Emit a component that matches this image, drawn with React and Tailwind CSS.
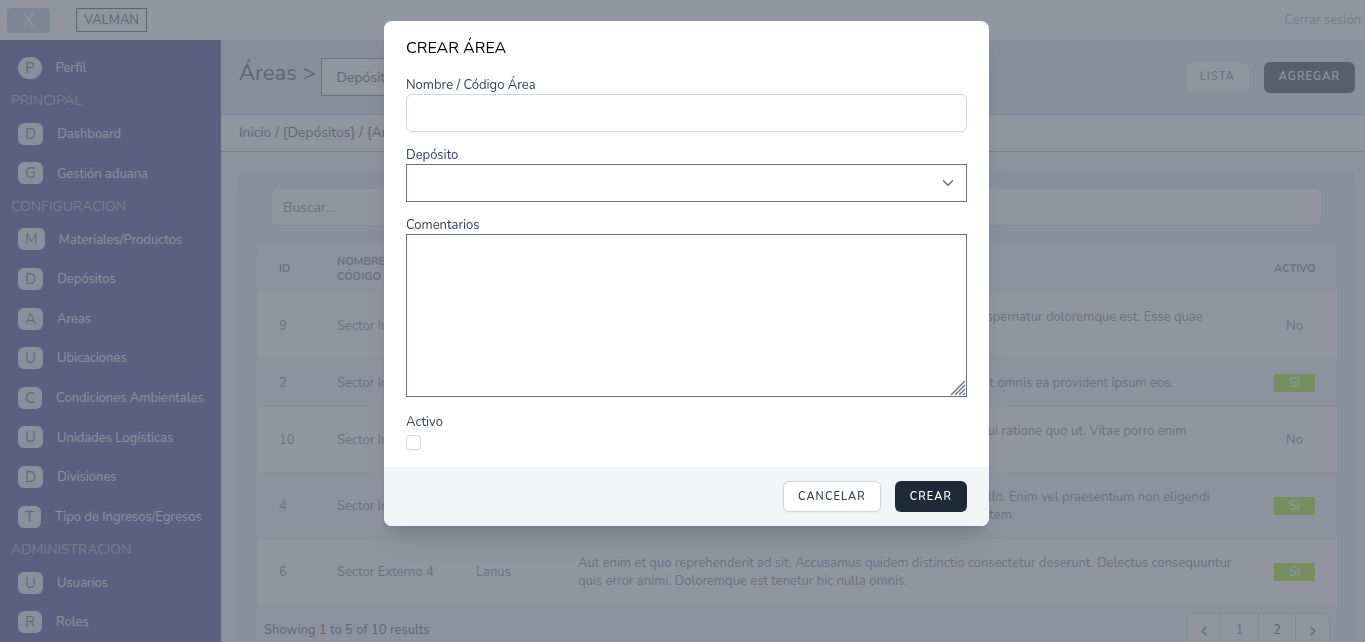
import { ChevronDown } from "lucide-react";

const profile = [{ label: "Perfil", round: true }];
const sections = [
  { title: "PRINCIPAL", items: ["Dashboard", "Gestión aduana"] },
  {
    title: "CONFIGURACION",
    items: [
      "Materiales/Productos",
      "Depósitos",
      "Areas",
      "Ubicaciones",
      "Condiciones Ambientales",
      "Unidades Logísticas",
      "Divisiones",
      "Tipo de Ingresos/Egresos",
    ],
  },
  { title: "ADMINISTRACION", items: ["Usuarios", "Roles"] },
];

const rows = [
  {
    id: 9,
    name: "Sector Interno 5",
    place: "Lanus",
    text: "Quia voluptas sit dolores rerum et quasi. Molestiae nihil et quia ut ea aspernatur doloremque est. Esse quae provident molestias et.",
    active: false,
  },
  {
    id: 2,
    name: "Sector Interno 1",
    place: "Lanus",
    text: "Rerum nihil et dolores sit quia a. Voluptas quidem molestiae dolorem ut omnis ea provident ipsum eos.",
    active: true,
  },
  {
    id: 10,
    name: "Sector Interno 6",
    place: "Lanus",
    text: "Nihil et dolores sit quia rerum a. Voluptas quidem molestiae dolorem qui ratione quo ut. Vitae porro enim exercitationem dolores.",
    active: false,
  },
  {
    id: 4,
    name: "Sector Interno 2",
    place: "Lanus",
    text: "Dolores sit quia rerum nihil et. Voluptas quidem molestiae dolorem et illo. Enim vel praesentium non eligendi doloribus quasi. Molestiae nihil et quia rerum sit dolores ab qui voluptatem.",
    active: true,
  },
  {
    id: 6,
    name: "Sector Externo 4",
    place: "Lanus",
    text: "Aut enim et quo reprehenderit ad sit. Accusamus quidem distinctio consectetur deserunt. Delectus consequuntur quis error animi. Doloremque est tenetur hic nulla omnis.",
    active: true,
  },
];

function NavItem({ label, round }) {
  return (
    <a href="#" className="flex flex-3 items-center gap-[14px] pl-[18px] text-[13px] text-gray-200">
      <span
        className={
          "bg-[#e4ebf1] px-[7px] text-[15px] leading-[22px] text-[#2f5a70] " +
          (round ? "rounded-full" : "rounded-md")
        }
      >
        {label[0]}
      </span>
      <span className="pt-[2px]">{label}</span>
    </a>
  );
}

function Sidebar() {
  return (
    <nav className="flex w-[221px] shrink-0 flex-col bg-[#312e81] pt-2">
      {profile.map((p) => (
        <NavItem key={p.label} {...p} />
      ))}
      {sections.map((s) => (
        <div key={s.title} className="contents">
          <h2 className="flex flex-2 items-center pl-[11px] text-[14px] text-slate-400">{s.title}</h2>
          {s.items.map((i) => (
            <NavItem key={i} label={i} />
          ))}
        </div>
      ))}
    </nav>
  );
}

function AreasTable() {
  return (
    <table className="w-full table-fixed border-separate border-spacing-0 text-left text-[13px] leading-[18px] text-gray-500">
      <thead>
        <tr className="h-[49px] bg-[#eff8f8] text-[11px] leading-[15px] font-bold text-gray-500">
          <th className="w-[58px] pl-[22px]">ID</th>
          <th className="w-[139px] px-[22px]">NOMBRE / CÓDIGO ÁREA</th>
          <th className="w-[102px] px-[22px]">DEPÓSITO</th>
          <th className="px-[22px]">COMENTARIOS</th>
          <th className="w-[85px] px-[22px]">ACTIVO</th>
        </tr>
      </thead>
      <tbody>
        {rows.map((r) => (
          <tr
            key={r.id}
            className="bg-white even:bg-[#eff8f8] [&>td]:border-b [&>td]:border-gray-200 [&>td]:pt-[15px] [&>td]:pb-[14px]"
          >
            <td className="pl-[22px]">{r.id}</td>
            <td className="pl-[22px] whitespace-nowrap">{r.name}</td>
            <td className="pl-[22px]">{r.place}</td>
            <td className="pr-4 pl-[22px]">{r.text}</td>
            <td className="px-[22px] text-center">
              {r.active ? <span className="block bg-lime-400 text-white">Si</span> : "No"}
            </td>
          </tr>
        ))}
      </tbody>
    </table>
  );
}

function Arrow({ flip }) {
  return (
    <svg viewBox="0 0 20 20" fill="currentColor" className={flip ? "size-[18px] rotate-180" : "size-[18px]"}>
      <path
        fillRule="evenodd"
        clipRule="evenodd"
        d="M12.707 5.293a1 1 0 010 1.414L9.414 10l3.293 3.293a1 1 0 01-1.414 1.414l-4-4a1 1 0 010-1.414l4-4a1 1 0 011.414 0z"
      />
    </svg>
  );
}

function Pagination() {
  return (
    <div className="flex items-start justify-between bg-[#eff8f8] pt-2 pr-[7px] pb-2 pl-[7px] text-[13px] text-gray-700">
      <p className="leading-[34px]">Showing 1 to 5 of 10 results</p>
      <div className="flex h-9 divide-x divide-gray-300 rounded-md border border-gray-300 bg-white text-gray-500 shadow-xs">
        <button aria-label="Anterior" className="flex w-[33px] items-center justify-center">
          <Arrow />
        </button>
        <button className="w-[38px]">1</button>
        <button className="w-[37px] text-gray-700">2</button>
        <button aria-label="Siguiente" className="flex w-[33px] items-center justify-center">
          <Arrow flip />
        </button>
      </div>
    </div>
  );
}

function Modal() {
  return (
    <div className="fixed inset-0 overflow-y-auto bg-[#6b7280bf] pt-[21px] pl-2">
      <div
        role="dialog"
        aria-modal="true"
        aria-labelledby="modal-title"
        className="mx-auto w-full max-w-[605px] overflow-hidden rounded-lg bg-white shadow-xl"
      >
        <form className="flex flex-col px-[22px] pt-[15px] pb-[17px] text-[13px] leading-[18px] text-gray-700">
          <h1 id="modal-title" className="mb-4 text-base leading-6 text-black">
            CREAR ÁREA
          </h1>
          <label htmlFor="nombre">Nombre / Código Área</label>
          <input id="nombre" type="text" className="mb-[14px] h-[38px] rounded-md border border-gray-300 px-3 shadow-xs" />
          <label htmlFor="deposito">Depósito</label>
          <div className="relative mb-[14px]">
            <select id="deposito" defaultValue="" className="block h-[38px] w-full appearance-none border border-gray-500 bg-white px-3">
              <option value=""></option>
            </select>
            <ChevronDown className="pointer-events-none absolute top-[10px] right-[10px] size-[18px] text-gray-500" strokeWidth={2} />
          </div>
          <label htmlFor="comentarios">Comentarios</label>
          <div className="relative mb-4">
            <textarea id="comentarios" className="block h-[163px] w-full resize-none border border-gray-500 px-3 py-2" />
            <svg
              viewBox="0 0 16 16"
              className="pointer-events-none absolute right-px bottom-px size-4 text-gray-500"
              stroke="currentColor"
              strokeWidth="1.400"
            >
              <path d="M1 15L15 1M5 15L15 5M9 15L15 9M13 15L15 13" />
            </svg>
          </div>
          <label htmlFor="activo">Activo</label>
          <input
            id="activo"
            type="checkbox"
            className="mt-1 size-[15px] appearance-none rounded-sm border border-gray-300 bg-white shadow-xs"
          />
        </form>
        <div className="flex justify-end gap-[14px] bg-gray-100 px-[22px] py-[14px] text-[11px] font-semibold tracking-widest">
          <button className="h-[31px] rounded-md border border-gray-300 bg-white px-[14px] pt-px text-gray-700 shadow-xs">CANCELAR</button>
          <button className="h-[31px] rounded-md bg-gray-800 px-[15px] pt-px text-white">CREAR</button>
        </div>
      </div>
    </div>
  );
}

export default function App() {
  return (
    <div className="flex h-screen flex-col overflow-hidden bg-gray-100 font-[Nunito,Lato,sans-serif]">
      <header className="flex h-10 shrink-0 items-center bg-white pr-1 pl-[7px]">
        <button className="h-[25px] w-[43px] rounded-sm bg-[#b4c6d8] text-lg leading-none text-white">X</button>
        <span className="ml-[26px] border border-gray-700 px-[7px] text-[13px] leading-[22px] text-gray-700">VALMAN</span>
        <a href="#" className="ml-auto pt-[2px] text-[13px] text-gray-400">
          Cerrar sesión
        </a>
      </header>
      <div className="flex min-h-0 flex-1">
        <Sidebar />
        <main className="min-w-0 flex-1 overflow-hidden">
          <div className="flex h-[75px] items-center border-b border-[#a9b8ee] bg-[#dbe7ef] pr-[10px] pl-[18px]">
            <h1 className="pb-2 text-[22px] text-gray-700">Áreas &gt;</h1>
            <select
              aria-label="Depósito"
              className="ml-[5px] h-[38px] w-[200px] appearance-none border border-gray-500 bg-white px-[15px] text-[14px] text-gray-700"
            >
              <option>Depósitos</option>
            </select>
            <button className="ml-auto h-[29px] rounded-md bg-white px-[14px] pt-px text-[11px] font-semibold tracking-widest text-gray-500">
              LISTA
            </button>
            <button className="ml-[15px] h-[31px] rounded-md bg-gray-800 px-[15px] pt-px text-[11px] font-semibold tracking-widest text-white">
              AGREGAR
            </button>
          </div>
          <div className="border-b border-gray-400 bg-white pl-[18px] text-[14px] leading-9 text-gray-700">
            Inicio / {"{Depósitos}"} / {"{Areas}"}
          </div>
          <div className="mx-[18px] mr-[10px] mt-[18px] rounded-lg bg-[#dce5f3] px-[18px] pt-[19px] pb-5 shadow-lg">
            <input
              aria-label="Buscar"
              placeholder="Buscar..."
              className="mx-[15px] mb-[19px] block h-9 w-[calc(100%-31px)] rounded-md bg-white px-[11px] text-[14px] shadow-xs placeholder:text-gray-500"
            />
            <div className="overflow-hidden rounded-lg">
              <AreasTable />
              <Pagination />
            </div>
          </div>
        </main>
      </div>
      <Modal />
    </div>
  );
}
